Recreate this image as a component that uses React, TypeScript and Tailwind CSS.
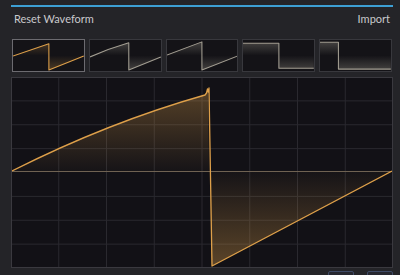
import React from 'react';

const ORANGE = '#dea04a';
const GRAY_WAVE = '#a29d91';

interface Thumb {
  line: string;
  upper: string;
  lower: string;
  selected?: boolean;
}

// thumbnail shapes drawn in a 73x33 box, center line at 16.5
const THUMBS: Thumb[] = [
  {
    selected: true,
    line: 'M0,17 L37,4 L37,32 L73,17',
    upper: 'M0,16.5 L0,17 L37,4 L37,16.5 Z',
    lower: 'M37,16.5 L37,32 L73,17 L73,16.5 Z',
  },
  {
    line: 'M0,18 Q20,9 40,3 L40,32 L73,18',
    upper: 'M0,16.5 L0,18 Q20,9 40,3 L40,16.5 Z',
    lower: 'M40,16.5 L40,32 L73,18 L73,16.5 Z',
  },
  {
    line: 'M0,16 L36,2 L36,32 L73,17',
    upper: 'M0,16.5 L0,16 L36,2 L36,16.5 Z',
    lower: 'M36,16.5 L36,32 L73,17 L73,16.5 Z',
  },
  {
    line: 'M0,3.5 L37,3.5 L37,30 L73,30',
    upper: 'M0,16.5 L0,3.5 L37,3.5 L37,16.5 Z',
    lower: 'M37,16.5 L37,30 L73,30 L73,16.5 Z',
  },
  {
    line: 'M0,2.5 L19,2.5 L19,31 L73,31',
    upper: 'M0,16.5 L0,2.5 L19,2.5 L19,16.5 Z',
    lower: 'M19,16.5 L19,31 L73,31 L73,16.5 Z',
  },
];

function ThumbCard({ thumb, idx }: { thumb: Thumb; idx: number }) {
  const color = thumb.selected ? ORANGE : GRAY_WAVE;
  const up = `tu${idx}`;
  const dn = `td${idx}`;
  return (
    <div
      className={
        'h-[33px] bg-[#141317] border ' +
        (thumb.selected ? 'border-[#6c6b70]' : 'border-[#38383d]')
      }
    >
      <svg width="100%" height="100%" viewBox="0 0 73 33" preserveAspectRatio="none">
        <defs>
          <linearGradient id={up} x1="0" y1="2" x2="0" y2="16.5" gradientUnits="userSpaceOnUse">
            <stop offset="0" stopColor={color} stopOpacity={thumb.selected ? 0.28 : 0.34} />
            <stop offset="1" stopColor={color} stopOpacity={0} />
          </linearGradient>
          <linearGradient id={dn} x1="0" y1="16.5" x2="0" y2="32" gradientUnits="userSpaceOnUse">
            <stop offset="0" stopColor={color} stopOpacity={0} />
            <stop offset="1" stopColor={color} stopOpacity={thumb.selected ? 0.28 : 0.34} />
          </linearGradient>
        </defs>
        <path d={thumb.upper} fill={`url(#${up})`} />
        <path d={thumb.lower} fill={`url(#${dn})`} />
        <path d={thumb.line} fill="none" stroke={color} strokeWidth={1.1} strokeLinejoin="round" />
      </svg>
    </div>
  );
}

function WaveGraph() {
  const W = 380;
  const H = 189;
  const mid = 93.5;
  const cols = [1, 2, 3, 4, 5, 6, 7].map((k) => (k * (W + 2)) / 8 - 1);
  const rows = [1, 2, 3, 5, 6, 7].map((k) => (k * (H + 2)) / 8 - 1);

  return (
    <svg width={W} height={H} viewBox={`0 0 ${W} ${H}`} className="block">
      <defs>
        <linearGradient id="gu" x1="0" y1="10" x2="0" y2={mid} gradientUnits="userSpaceOnUse">
          <stop offset="0" stopColor={ORANGE} stopOpacity={0.34} />
          <stop offset="1" stopColor={ORANGE} stopOpacity={0.02} />
        </linearGradient>
        <linearGradient id="gd" x1="0" y1={mid} x2="0" y2="188" gradientUnits="userSpaceOnUse">
          <stop offset="0" stopColor={ORANGE} stopOpacity={0.02} />
          <stop offset="1" stopColor={ORANGE} stopOpacity={0.36} />
        </linearGradient>
      </defs>
      {cols.map((x) => (
        <line key={'c' + x} x1={x} y1={0} x2={x} y2={H} stroke="#2a292f" strokeWidth={1} />
      ))}
      {rows.map((y) => (
        <line key={'r' + y} x1={0} y1={y} x2={W} y2={y} stroke="#2a292f" strokeWidth={1} />
      ))}
      <line x1={0} y1={mid} x2={W} y2={mid} stroke="#6e6152" strokeWidth={1} />

      <path
        d={`M0,${mid} L0,93 Q96,44.5 193,17 L195,13 L196,10 L197,${mid} Z`}
        fill="url(#gu)"
      />
      <path d={`M197.8,${mid} L200,188 L${W},93 L${W},${mid} Z`} fill="url(#gd)" />
      <path
        d="M0,93 Q96,44.5 193,17 L194.5,15 L195.5,11 L196.3,14 L197,10 L200,188 L380,93"
        fill="none"
        stroke={ORANGE}
        strokeWidth={1.3}
        strokeLinejoin="round"
      />
    </svg>
  );
}

export default function App() {
  return (
    <div className="w-[400px] h-[275px] overflow-hidden bg-[#242428] pl-[11px] pr-[7px] pt-[5px] font-['Lato','Open_Sans',sans-serif]">
      <div className="h-[2px] bg-[#3d9fd4]" />
      <div className="flex items-center justify-between h-[14px] mt-[5px] px-[3px] text-[11px] leading-[14px] text-[#c9c9cc]">
        <span>Reset Waveform</span>
        <span>Import</span>
      </div>
      <div className="grid grid-cols-5 gap-[4px] mt-[13px] pl-[1px] pr-[1px]">
        {THUMBS.map((t, i) => (
          <ThumbCard key={i} thumb={t} idx={i} />
        ))}
      </div>
      <div className="mt-[5px] h-[191px] bg-[#121116] border border-[#3a393f]">
        <WaveGraph />
      </div>
      <div className="flex justify-end gap-[13px] mt-[3px]">
        <div className="w-[26px] h-[10px] rounded-[2px] bg-[#26272f] border border-[#3e4a66]" />
        <div className="w-[26px] h-[10px] rounded-[2px] bg-[#26272f] border border-[#3e4a66]" />
      </div>
    </div>
  );
}
